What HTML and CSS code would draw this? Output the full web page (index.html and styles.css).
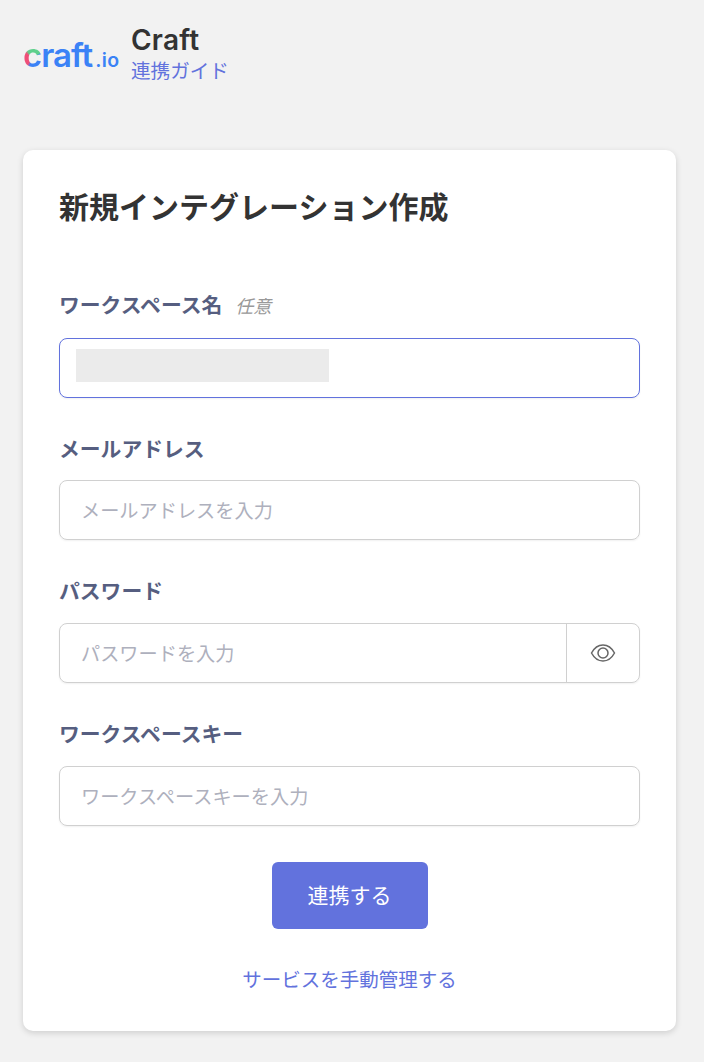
FILE: index.html
```html
<!DOCTYPE html>
<html lang="ja">
<head>
    <meta charset="UTF-8">
    <title>Craft 連携ガイド</title>
    <link rel="stylesheet" href="styles.css">
</head>
<body>
    <header class="header">
        <div class="logo"><span class="logo-c">c</span>raft<span class="logo-io">.io</span></div>
        <div class="header-text">
            <div class="app-name">Craft</div>
            <a class="guide-link">連携ガイド</a>
        </div>
    </header>

    <main class="card">
        <h1 class="card-title">新規インテグレーション作成</h1>

        <div class="field field-first">
            <label class="field-label">ワークスペース名<span class="optional">任意</span></label>
            <div class="input input-focus">
                <div class="redacted"></div>
            </div>
        </div>

        <div class="field">
            <label class="field-label">メールアドレス</label>
            <div class="input"><span class="placeholder">メールアドレスを入力</span></div>
        </div>

        <div class="field">
            <label class="field-label">パスワード</label>
            <div class="input">
                <span class="placeholder">パスワードを入力</span>
                <div class="eye-btn">
                    <svg width="26" height="20" viewBox="0 0 26 20" fill="none" stroke="#666" stroke-width="1.5">
                        <path d="M1.5 10C4.5 4.4 8.5 2 13 2S21.5 4.4 24.5 10C21.5 15.6 17.5 18 13 18S4.5 15.6 1.5 10Z"/>
                        <circle cx="13" cy="10" r="5"/>
                    </svg>
                </div>
            </div>
        </div>

        <div class="field">
            <label class="field-label">ワークスペースキー</label>
            <div class="input"><span class="placeholder">ワークスペースキーを入力</span></div>
        </div>

        <button class="submit">連携する</button>
        <a class="manual-link">サービスを手動管理する</a>
    </main>
</body>
</html>
```

FILE: styles.css
```css
* {
    box-sizing: border-box;
}
body {
    margin: 0;
    padding: 22px 28px 31px 23px;
    background: #f2f2f2;
    font-family: Inter, "Noto Sans CJK JP", sans-serif;
    color: #333;
}
.header {
    display: flex;
    align-items: center;
    gap: 12px;
    height: 64px;
    margin-bottom: 64px;
}
.logo {
    width: 96px;
    padding-top: 2px;
    font-size: 33px;
    font-weight: 600;
    color: #3b82f6;
    white-space: nowrap;
    letter-spacing: -1px;
}
.logo-c {
    background: conic-gradient(from -30deg at 50% 58%, #5fd08c 0deg, #5fd08c 85deg, #3b82f6 95deg, #3b82f6 225deg, #ef4f78 245deg, #ef4f78 340deg, #5fd08c 360deg);
    -webkit-background-clip: text;
    background-clip: text;
    color: transparent;
}
.logo-io {
    margin-left: 3px;
    font-size: 19.5px;
    letter-spacing: 0.4px;
}
.app-name {
    font-size: 28px;
    font-weight: 600;
    line-height: 34px;
    letter-spacing: 0.2px;
}
.guide-link {
    display: block;
    font-size: 19.6px;
    line-height: 28px;
    color: #6272dd;
}
.card {
    display: flex;
    flex-direction: column;
    height: 881px;
    padding: 32px 36px;
    background: #fff;
    border-radius: 10px;
    box-shadow: 0 2px 6px rgba(0, 0, 0, 0.15);
}
.card-title {
    margin: 0;
    font-size: 30px;
    font-weight: 700;
    line-height: 50px;
}
.field {
    margin-top: 37px;
}
.field-first {
    margin-top: 59px;
}
.field-label {
    display: block;
    margin-bottom: 15.7px;
    font-size: 20.8px;
    font-weight: 700;
    line-height: 30px;
    color: #565e80;
}
.optional {
    margin-left: 13px;
    font-size: 18px;
    font-weight: 400;
    font-style: italic;
    color: #999;
}
.input {
    display: flex;
    align-items: center;
    height: 60px;
    padding-left: 21px;
    border: 1px solid #d0d0d0;
    border-radius: 8px;
    box-shadow: 0 1px 2px rgba(0, 0, 0, 0.06);
}
.input-focus {
    padding-left: 16px;
    border-color: #6272dd;
}
.redacted {
    align-self: flex-start;
    width: 253px;
    height: 33px;
    margin-top: 10px;
    background: #ebebeb;
}
.placeholder {
    flex: 1;
    font-size: 19.2px;
    color: #aeb0bd;
}
.eye-btn {
    display: flex;
    align-items: center;
    justify-content: center;
    width: 73px;
    height: 100%;
    border-left: 1px solid #d0d0d0;
}
.submit {
    align-self: center;
    width: 156px;
    height: 67px;
    margin-top: 36px;
    padding-bottom: 3px;
    border: none;
    border-radius: 6px;
    background: #6272dd;
    color: #fff;
    font-family: inherit;
    font-size: 21px;
}
.manual-link {
    align-self: center;
    margin-top: 36px;
    font-size: 19.5px;
    line-height: 30px;
    color: #6272dd;
}
```
